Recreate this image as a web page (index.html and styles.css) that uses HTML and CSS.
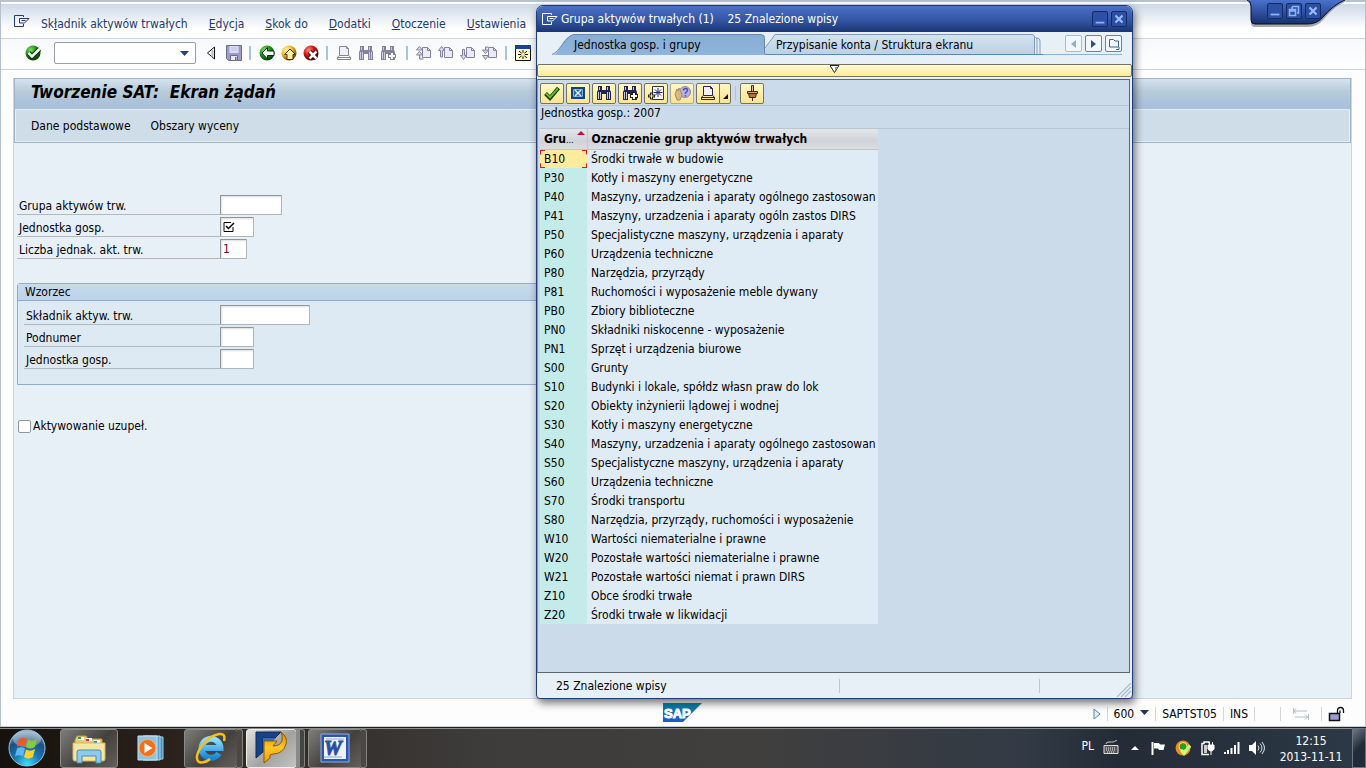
FILE: index.html
```html
<!DOCTYPE html>
<html lang="pl">
<head>
<meta charset="utf-8">
<title>Tworzenie SAT: Ekran żądań</title>
<link rel="stylesheet" href="styles.css">
</head>
<body>
<svg class="defs" aria-hidden="true">
  <defs>
    <radialGradient id="gGreen" cx=".35" cy=".3" r=".7"><stop offset="0" stop-color="#7be35a"/><stop offset=".5" stop-color="#1d9a16"/><stop offset="1" stop-color="#04400a"/></radialGradient>
    <radialGradient id="gYellow" cx=".35" cy=".3" r=".7"><stop offset="0" stop-color="#fff7a0"/><stop offset=".5" stop-color="#f5c21a"/><stop offset="1" stop-color="#7a4d00"/></radialGradient>
    <radialGradient id="gRed" cx=".35" cy=".3" r=".7"><stop offset="0" stop-color="#ff8a7a"/><stop offset=".5" stop-color="#d81414"/><stop offset="1" stop-color="#5a0000"/></radialGradient>
    <linearGradient id="gTab1" x2="0" y2="1"><stop offset="0" stop-color="#86add5"/><stop offset="1" stop-color="#90b5dd"/></linearGradient>
    <linearGradient id="gTab2" x2="0" y2="1"><stop offset="0" stop-color="#d3e4f1"/><stop offset="1" stop-color="#b9d0e8"/></linearGradient>
    <linearGradient id="gSap" x2="0" y2="1"><stop offset="0" stop-color="#0787a3"/><stop offset="1" stop-color="#1a58d0"/></linearGradient>
    <linearGradient id="gBlue" x2="0" y2="1"><stop offset="0" stop-color="#4a72cd"/><stop offset="1" stop-color="#16306f"/></linearGradient>
    <radialGradient id="gOrb" cx=".5" cy=".95" r=".9"><stop offset="0" stop-color="#3fe0ff"/><stop offset=".4" stop-color="#1779b8"/><stop offset=".75" stop-color="#1d4f80"/><stop offset="1" stop-color="#7fa5bf"/></radialGradient>
    <linearGradient id="gIe" x2="0" y2="1"><stop offset="0" stop-color="#8fe0ff"/><stop offset="1" stop-color="#1488d8"/></linearGradient>
    <linearGradient id="gGold" x2="0" y2="1"><stop offset="0" stop-color="#c98a00"/><stop offset=".5" stop-color="#ffc62a"/><stop offset="1" stop-color="#f29a00"/></linearGradient>
    <symbol id="exit" viewBox="0 0 16 12"><path d="M9.500 9v2.500h-9v-11h9V2" fill="none" stroke="currentColor"/><path d="M5.500 3.500h9.500M15 3.500l-4.500 4.500h-5V3.500M7.500 5.500h4" fill="none" stroke="currentColor"/></symbol>
    <symbol id="binoc" viewBox="0 0 16 16"><path d="M2 1h4v4h4V1h4v4l1 2v8h-5v-6H6v6H1V7l1-2z" fill="currentColor"/><path d="M3.500 2v3M11.500 2v3M2.500 7v7M4.500 7v7M11.500 7v7M13.500 7v7" stroke="#c8c8e6"/></symbol>
    <symbol id="printer" viewBox="0 0 16 16"><path d="M3.500 10.500v-9h7l2 2v7zM10.500 1.500v2h2" fill="#f1f0fb" stroke="currentColor"/><path d="M3 10.500L1.500 12.500v2h13v-2L13 10.500M1.500 12.500h13" fill="none" stroke="currentColor"/></symbol>
    <symbol id="page" viewBox="0 0 16 16"><path d="M6.500 2.500h5l3 3v7h-8zM11.500 2.500v3h3" fill="#eceafa" stroke="#85829f"/></symbol>
    <symbol id="min" viewBox="0 0 16 16"><path d="M3 12h10" stroke="#8fb4ff" stroke-width="2"/></symbol>
    <symbol id="close" viewBox="0 0 16 16"><path d="M4 4l8 8M12 4l-8 8" stroke="#9dbcff" stroke-width="2.500"/></symbol>
  </defs>
</svg>

<div class="app">
  <header class="head">
    <nav class="menu" aria-label="Menu">
      <svg class="exit" width="16" height="12"><use href="#exit"/></svg>
      <button>Sk<u>ł</u>adnik aktywów trwałych</button>
      <button><u>E</u>dycja</button>
      <button><u>S</u>kok do</button>
      <button><u>D</u>odatki</button>
      <button><u>O</u>toczenie</button>
      <button><u>U</u>stawienia</button>
    </nav>
    <div class="sysbox">
      <svg class="sysshape" width="98" height="28" viewBox="0 0 98 28"><path d="M0 0h98C88 4 82 11 76 18q-6 7-15 7H8q-4 0-4-4V6Q4 1 0 0z" fill="#111" opacity=".35" transform="translate(0 2)"/><path d="M0 0h98C88 4 82 11 76 17q-6 7-15 7H8q-4 0-4-4V6Q4 1 0 0z" fill="url(#gBlue)"/><path d="M0 0Q4 1 4 6v14q0 4 4 4h53q9 0 15-7Q86 5 98 0" fill="none" stroke="#080d20"/></svg>
      <div class="sysbtns">
        <button class="wbtn" aria-label="Minimalizuj"><svg width="14" height="14"><use href="#min"/></svg></button>
        <button class="wbtn" aria-label="Przywróć"><svg width="14" height="14" viewBox="0 0 14 14"><path d="M2.500 5.500h6v6h-6zM2 7h7M5 2.500h6.500V9H10M5 3v2" fill="none" stroke="#8fb4ff" stroke-width="1.500"/></svg></button>
        <button class="wbtn" aria-label="Zamknij"><svg width="14" height="14"><use href="#close"/></svg></button>
      </div>
    </div>
  </header>

  <div class="tools">
    <button class="ic t-ok" aria-label="Enter"><svg width="16" height="16" viewBox="0 0 16 16"><circle cx="8" cy="8" r="7.500" fill="url(#gGreen)"/><path d="M3.500 8l3.500 3.500L14.500 4" fill="none" stroke="#0c3a08" stroke-width="5"/><path d="M3.500 8l3.500 3.500L14.500 4" fill="none" stroke="#fff" stroke-width="2.500"/></svg></button>
    <div class="combo"><input type="text" aria-label="Komenda"><svg width="9" height="5" viewBox="0 0 9 5"><path d="M0 0h9L4.500 5z" fill="#27427c"/></svg></div>
    <button class="ic narrow" aria-label="Zwiń"><svg width="10" height="14" viewBox="0 0 10 14"><path d="M8.500 1v12L1.500 7z" fill="#fff" stroke="#111"/><path d="M6.500 4v7" stroke="#bbb" stroke-width="2"/></svg></button>
    <button class="ic t-save" aria-label="Zapisz"><svg width="16" height="16" viewBox="0 0 16 16"><path d="M.5.500h15v15h-13l-2-2z" fill="#9e9bc8" stroke="#6c6a91"/><path d="M3.500 1h9v7h-9z" fill="#dcdcf6"/><path d="M5 3h6M5 5h6" stroke="#bdbde0"/><path d="M4.500 10.500h7v5h-7z" fill="#e8e8f4" stroke="#6c6a91"/><path d="M9 12h1.500v3H9z" fill="#6c6a91"/></svg></button>
    <span class="sep"></span>
    <button class="ic" aria-label="Wstecz"><svg width="16" height="16" viewBox="0 0 16 16"><circle cx="8" cy="8" r="7.500" fill="url(#gGreen)"/><path d="M3 8l5.500-5.500v3.500h6.500v4.500H8.500V14z" fill="#fff" stroke="#062f06"/></svg></button>
    <button class="ic" aria-label="Zakończ"><svg width="16" height="16" viewBox="0 0 16 16"><circle cx="8" cy="8" r="7.500" fill="url(#gYellow)"/><path d="M9 4l5.500 5.500h-2.500v5H6v-5H3.500z" fill="#fff2a8" stroke="#4a3000"/></svg></button>
    <button class="ic" aria-label="Anuluj"><svg width="16" height="16" viewBox="0 0 16 16"><circle cx="8" cy="8" r="7.500" fill="url(#gRed)"/><path d="M6.500 6.500l7 7M13.500 6.500l-7 7" stroke="#300" stroke-width="4.500"/><path d="M6.500 6.500l7 7M13.500 6.500l-7 7" stroke="#fff" stroke-width="2.500"/></svg></button>
    <span class="sep"></span>
    <button class="ic dim" aria-label="Drukuj"><svg width="16" height="16"><use href="#printer"/></svg></button>
    <button class="ic dim" aria-label="Szukaj"><svg width="16" height="16"><use href="#binoc"/></svg></button>
    <button class="ic dim t-next" aria-label="Szukaj dalej"><svg width="16" height="16"><use href="#binoc"/><path d="M8 11h8M12 7v8" stroke="#85829f" stroke-width="4"/><path d="M9 11h6M12 8v6" stroke="#fff" stroke-width="2"/></svg></button>
    <span class="sep"></span>
    <button class="ic" aria-label="Pierwsza strona"><svg width="16" height="16"><use href="#page"/><path d="M.5 5L3.500 1.500l3 3.500zM.5 10l3-3.500 3 3.500zM3.500 10v4h4" fill="#dcd9f2" stroke="#85829f"/></svg></button>
    <button class="ic" aria-label="Poprzednia strona"><svg width="16" height="16"><use href="#page"/><path d="M.5 5.500l3-4 3 4h-2V12h-2V5.500z" fill="#dcd9f2" stroke="#85829f"/></svg></button>
    <button class="ic" aria-label="Następna strona"><svg width="16" height="16"><use href="#page"/><path d="M.5 10.500h2v-6h2v6h2l-3 4z" fill="#dcd9f2" stroke="#85829f"/></svg></button>
    <button class="ic" aria-label="Ostatnia strona"><svg width="16" height="16"><use href="#page"/><path d="M.5 5h6L3.500 8.500zM.5 10.500h6l-3 4zM3.500 5V2h3" fill="#dcd9f2" stroke="#85829f"/></svg></button>
    <span class="sep"></span>
    <button class="ic" aria-label="Nowy modus"><svg width="16" height="16" viewBox="0 0 16 16"><path d="M.5.500h15v15H.5z" fill="#fffbd0" stroke="#111"/><path d="M0 0h16v4H0z" fill="#1c3f9c"/><path d="M8 5v9M3 9.500h10M4 6l8 7M12 6l-8 7" stroke="#111"/><circle cx="8" cy="9.500" r="2" fill="#ffe95a"/></svg></button>
  </div>

  <main class="work">
    <div class="titlebox">
      <h1>Tworzenie SAT:&nbsp; Ekran żądań</h1>
      <div class="appbar"><button>Dane podstawowe</button><button>Obszary wyceny</button></div>
    </div>
    <form class="form">
      <div class="row"><label for="g">Grupa aktywów trw.</label><input id="g" class="w62" type="text"></div>
      <div class="row"><label for="j">Jednostka gosp.</label><span class="req"><input id="j" class="w34" type="text"><svg width="12" height="12" viewBox="0 0 12 12"><path d="M8 1.500H1v9h9V6" fill="none" stroke="#000"/><path d="M3 5l2.500 2.500L11 2" fill="none" stroke="#000" stroke-width="1.500"/></svg></span></div>
      <div class="row"><label for="l">Liczba jednak. akt. trw.</label><input id="l" class="w27 num" type="text" value="1"></div>
      <section class="group">
        <h2>Wzorzec</h2>
        <div class="groupbody">
          <div class="row"><label for="s">Składnik aktyw. trw.</label><input id="s" class="w90" type="text"></div>
          <div class="row"><label for="p">Podnumer</label><input id="p" class="w34" type="text"></div>
          <div class="row"><label for="k">Jednostka gosp.</label><input id="k" class="w34" type="text"></div>
        </div>
      </section>
      <label class="check"><input type="checkbox">Aktywowanie uzupeł.</label>
    </form>
  </main>

  <footer class="status">
    <svg class="sap" width="40" height="19" viewBox="0 0 40 19"><path d="M0 0h39L20 19H0z" fill="url(#gSap)"/><text x="1" y="15">SAP</text></svg>
    <div class="stat">
      <svg width="8" height="12" viewBox="0 0 8 12"><path d="M1 1v10l6-5z" fill="#e3f2fb" stroke="#5b82b0"/></svg>
      <i></i><span>600</span><svg class="dd" width="9" height="5" viewBox="0 0 9 5"><path d="M0 0h9L4.500 5z" fill="#1d2f63"/></svg>
      <i></i><span>SAPTST05</span><i></i><span>INS</span><i></i><b></b><i></i>
      <svg class="swap" width="18" height="14" viewBox="0 0 18 14"><path d="M1.500 1v6M1 4h14M4 1.500L2 4l2 2.500M16.500 7v6M3 10h13M13 7.500l2.500 2.500-2.500 2.500" fill="none" stroke="#b9bcc2"/></svg>
      <i></i>
      <svg width="17" height="16" viewBox="0 0 17 16"><path d="M1.500 7.500h10v7h-10z" fill="#9a9ad0" stroke="#111" stroke-width="1.500"/><path d="M9.500 7V4q0-2.500 3-2.500t3 3V7M12 7V4.500" fill="none" stroke="#111" stroke-width="1.300"/></svg>
    </div>
  </footer>
</div>

<section class="dialog" role="dialog" aria-labelledby="dt">
  <div class="dtitle">
    <svg width="16" height="12"><use href="#exit"/></svg>
    <h2 id="dt">Grupa aktywów trwałych (1)&nbsp;&nbsp;&nbsp; 25 Znalezione wpisy</h2>
    <button class="wbtn" aria-label="Minimalizuj"><svg width="14" height="14"><use href="#min"/></svg></button>
    <button class="wbtn" aria-label="Zamknij"><svg width="14" height="14"><use href="#close"/></svg></button>
  </div>
  <div class="tabs">
    <button class="tab tab1"><svg width="213" height="21" viewBox="0 0 213 21"><path d="M0 21C8 21 9 3 22 .500H209q4 0 4 4V21z" fill="url(#gTab1)"/><path d="M0 20.500C8 18 14 1 22 .500H209q3.500 0 3.500 4V20" fill="none" stroke="#6389b4"/></svg><span>Jednostka gosp. i grupy</span></button>
    <button class="tab tab2"><svg width="278" height="21" viewBox="0 0 278 21"><path d="M0 21V15L10 .500H267q2 0 2 3V21z" fill="url(#gTab2)"/><path d="M0 14L10 .500H267q2.500 0 2.500 3V20M269 3q3 0 3 3V20M272 4q3 0 3 3V20" fill="none" stroke="#7c9dbd"/><path d="M0 20.500h278" stroke="#5f88b5"/></svg><span>Przypisanie konta / Struktura ekranu</span></button>
    <div class="tabnav">
      <button class="off" aria-label="Poprzednia karta"><svg width="5" height="8" viewBox="0 0 5 8"><path d="M5 0v8L0 4z" fill="#93afc9"/></svg></button>
      <button aria-label="Następna karta"><svg width="5" height="8" viewBox="0 0 5 8"><path d="M0 0v8l5-4z" fill="#2f5377"/></svg></button>
      <button aria-label="Lista kart"><svg width="12" height="12" viewBox="0 0 12 12"><path d="M1.500 9V1.500h4L7 3h3.500v6zM8 11.500h3V9" fill="none" stroke="#3d678e"/></svg></button>
    </div>
  </div>
  <button class="fold" aria-label="Ograniczenia"><svg width="10" height="8" viewBox="0 0 10 8"><path d="M0 .500h9L4.500 7.500z" fill="#fff" stroke="#222"/><path d="M5 2h2.500L5 6z" fill="#999"/></svg></button>
  <div class="frame">
    <div class="ybar">
      <button class="yb" aria-label="Kopiuj"><svg width="16" height="16" viewBox="0 0 16 16"><path d="M1.500 8.500L6 13 14.500 3" fill="none" stroke="#143a08" stroke-width="4"/><path d="M2 8.500L6 12.300 14 3.300" fill="none" stroke="#5fc02a" stroke-width="2"/></svg></button>
      <button class="yb" aria-label="Zamknij"><svg width="16" height="16" viewBox="0 0 16 16"><path d="M1 2h14v12H1z" fill="#16407f"/><path d="M3.500 4.500h9v7h-9z" fill="#2b62a8" stroke="#7eaedc"/><path d="M5 5l6 6M11 5l-6 6" stroke="#d6ecff" stroke-width="1.500"/></svg></button>
      <button class="yb navy" aria-label="Szukaj"><svg width="16" height="16"><use href="#binoc"/></svg></button>
      <button class="yb navy" aria-label="Szukaj dalej"><svg width="16" height="16"><use href="#binoc"/><path d="M8 11h8M12 7v8" stroke="#222" stroke-width="4"/><path d="M9 11h6M12 8v6" stroke="#fff" stroke-width="2"/></svg></button>
      <button class="yb" aria-label="Nowy wybór"><svg width="16" height="16" viewBox="0 0 16 16"><path d="M4.500 1.500h11v13H4.500z" fill="#f5f3ff" stroke="#333"/><path d="M10 3v9M5.500 7.500h9M7 4.500l6 6M13 4.500l-6 6" stroke="#26306c"/><path d="M0 11h7M3.500 7.500v7" stroke="#222" stroke-width="3"/><path d="M1 11h5M3.500 8.500v5" stroke="#ffe75a"/></svg></button>
      <button class="yb yoff" aria-label="Wybór osobisty"><svg width="17" height="16" viewBox="0 0 17 16"><circle cx="11" cy="7" r="5.500" fill="#b5b3e2" stroke="#8583b4"/><path d="M9.500 5.500q0-2 2-2t2 1.500-2 3v1M11.500 10v1.500" fill="none" stroke="#5551a4" stroke-width="1.500"/><path d="M1 9l2-5 1 2 1-3 2 4 1 3-2 5H3z" fill="#d8b780" stroke="#a98d62"/></svg></button>
      <button class="yb navy ypr" aria-label="Drukuj"><svg width="16" height="16"><use href="#printer"/></svg></button><button class="yb ydd" aria-label="Opcje drukowania"><svg width="5" height="5" viewBox="0 0 5 5"><path d="M5 0v5H0z" fill="#111"/></svg></button>
      <span class="sep"></span>
      <button class="yb" aria-label="Przypnij"><svg width="16" height="16" viewBox="0 0 16 16"><path d="M7.500 .500h2v6h-2z" fill="#e8b890" stroke="#4a2615"/><path d="M3.500 6.500h10v2h-10z" fill="#e0a070" stroke="#4a2615"/><path d="M4.500 8.500h8l-1 4h-6z" fill="#b9703f" stroke="#4a2615"/><path d="M8.500 13v3" stroke="#4a2615"/></svg></button>
    </div>
    <p class="crit">Jednostka gosp.: 2007</p>
    <table>
      <thead><tr><th scope="col" class="c1">Gru<small>...</small><svg width="8" height="4" viewBox="0 0 8 4"><path d="M4 0l4 4H0z" fill="#c8102e"/></svg></th><th scope="col">Oznaczenie grup aktywów trwałych</th></tr></thead>
      <tbody>
        <tr class="sel"><td>B10<span class="cur"></span></td><td>Środki trwałe w budowie</td></tr>
        <tr><td>P30</td><td>Kotły i maszyny energetyczne</td></tr>
        <tr><td>P40</td><td>Maszyny, urzadzenia i aparaty ogólnego zastosowan</td></tr>
        <tr><td>P41</td><td>Maszyny, urzadzenia i aparaty ogóln zastos DIRS</td></tr>
        <tr><td>P50</td><td>Specjalistyczne maszyny, urządzenia i aparaty</td></tr>
        <tr><td>P60</td><td>Urządzenia techniczne</td></tr>
        <tr><td>P80</td><td>Narzędzia, przyrządy</td></tr>
        <tr><td>P81</td><td>Ruchomości i wyposażenie meble dywany</td></tr>
        <tr><td>PB0</td><td>Zbiory biblioteczne</td></tr>
        <tr><td>PN0</td><td>Składniki niskocenne - wyposażenie</td></tr>
        <tr><td>PN1</td><td>Sprzęt i urządzenia biurowe</td></tr>
        <tr><td>S00</td><td>Grunty</td></tr>
        <tr><td>S10</td><td>Budynki i lokale, spółdz własn praw do lok</td></tr>
        <tr><td>S20</td><td>Obiekty inżynierii lądowej i wodnej</td></tr>
        <tr><td>S30</td><td>Kotły i maszyny energetyczne</td></tr>
        <tr><td>S40</td><td>Maszyny, urzadzenia i aparaty ogólnego zastosowan</td></tr>
        <tr><td>S50</td><td>Specjalistyczne maszyny, urządzenia i aparaty</td></tr>
        <tr><td>S60</td><td>Urządzenia techniczne</td></tr>
        <tr><td>S70</td><td>Środki transportu</td></tr>
        <tr><td>S80</td><td>Narzędzia, przyrządy, ruchomości i wyposażenie</td></tr>
        <tr><td>W10</td><td>Wartości niematerialne i prawne</td></tr>
        <tr><td>W20</td><td>Pozostałe wartości niematerialne i prawne</td></tr>
        <tr><td>W21</td><td>Pozostałe wartości niemat i prawn DIRS</td></tr>
        <tr><td>Z10</td><td>Obce środki trwałe</td></tr>
        <tr><td>Z20</td><td>Środki trwałe w likwidacji</td></tr>
      </tbody>
    </table>
  </div>
  <div class="dstatus">
    <span>25 Znalezione wpisy</span><i></i><i class="far"></i>
    <svg width="14" height="14" viewBox="0 0 14 14"><path d="M0 14L14 0M4 14L14 4M8 14l6-6" stroke="#a9b6c4" stroke-width="1.200"/></svg>
  </div>
</section>

<div class="taskbar">
  <button class="orb" aria-label="Start"><svg width="38" height="38" viewBox="0 0 38 38"><circle cx="19" cy="19" r="18" fill="url(#gOrb)" stroke="#9cc3da"/><ellipse cx="19" cy="10" rx="14" ry="8" fill="#dceaf3" opacity=".4"/><path d="M11 10q4-2.500 8 0l-2 8q-4-2.500-8 0z" fill="#ee5a24"/><path d="M20 10.500q4 2.500 9-.5l-2 8q-5 3-9 0z" fill="#8cc63e"/><path d="M9 19.500q4-2.500 8 0l-2 8q-4-2.500-8 0z" fill="#5cb8f0"/><path d="M18 20.500q4 2.500 9-.5l-2 8q-5 3-9 0z" fill="#ffd02e"/></svg></button>
  <button class="task t-exp" aria-label="Eksplorator"><svg width="34" height="32" viewBox="0 0 34 32"><path d="M3 8l2-4h9l2 3h14v21H3z" fill="#e6cd7a" stroke="#b99b45"/><path d="M6 5h6v3H6zM14 6h6v3h-6zM22 8h6v3h-6z" fill="#fff"/><path d="M6 5h3v2H6z" fill="#26a44a"/><path d="M14 7h3v2h-3z" fill="#d33"/><path d="M22 9h3v2h-3z" fill="#28c"/><path d="M1 11h32v16q0 2-2 2H3q-2 0-2-2z" fill="#f6e6a2" stroke="#d0b562"/><path d="M5 31V20q0-2 2-2h20q2 0 2 2v11h-5v-7H10v7z" fill="#8fcbe8" stroke="#3e8fb8"/></svg></button>
  <button class="task t-wmp" aria-label="Media Player"><svg width="28" height="26" viewBox="0 0 28 26"><path d="M8 1l18 1v22l-18 1z" fill="#4a8fb8" stroke="#9dd0e8"/><path d="M6 1l17 0v24H6z" fill="#5ba3cc" stroke="#a9d8ee"/><path d="M1 1h19v24H1z" fill="#8cc4e2" stroke="#c4e6f6"/><circle cx="10.500" cy="13" r="8.500" fill="#f0701c" stroke="#ffb070"/><path d="M7.500 8v10l8-5z" fill="#fff"/></svg></button>
  <button class="task t-ie stack" aria-label="Internet Explorer"><svg width="34" height="34" viewBox="0 0 34 34"><path d="M25 22.500A9.500 9.500 0 1 1 26.500 17H9" fill="none" stroke="url(#gIe)" stroke-width="6"/><path d="M30 10q2-8-5-7Q14 5 7 16T5 31q5 2 11-3" fill="none" stroke="#f4bf1f" stroke-width="2.500"/></svg></button>
  <button class="task t-sap stack2" aria-label="SAP Logon"><svg width="34" height="34" viewBox="0 0 34 34"><path d="M1 1h25l-6 6H8v14l-7 6z" fill="#174486" stroke="#0c2a5c"/><path d="M8 7h13L9 19z" fill="#3b6db4"/><path d="M9 10h13l-4 5q7 0 9-5 1-5-1-9 7 5 5 12-3 10-13 10l-3 1v3l-6 5z" fill="url(#gGold)" stroke="#8a5a00"/></svg></button>
  <button class="task t-word stack" aria-label="Word"><svg width="30" height="30" viewBox="0 0 30 30"><path d="M1 1h28v28H1z" fill="#2b56b0" stroke="#8fb0e8"/><path d="M4 4h22v22H4z" fill="#eef3fc"/><text x="4" y="22">W</text><path d="M4 24h18M6 6h18" stroke="#8aa5d8"/></svg></button>
  <div class="tray">
    <span class="lang">PL</span>
    <svg width="16" height="16" viewBox="0 0 16 16"><path d="M1 5.500h14v8H1z" fill="#555" stroke="#ddd"/><path d="M3 8h10M3 10h10M4 12h8" stroke="#eee" stroke-dasharray="1 1"/><path d="M3 4q0-2 3-2t4 0 4-2" fill="none" stroke="#ccc"/></svg>
    <svg class="up" width="8" height="4" viewBox="0 0 8 4"><path d="M4 0l4 4H0z" fill="#fff"/></svg>
    <svg width="15" height="15" viewBox="0 0 15 15"><path d="M1.500 1v13" stroke="#fff" stroke-width="2"/><path d="M3 2h5l1 1.500h5L12.500 9H8L7 7.500H3z" fill="#fff"/></svg>
    <svg width="17" height="16" viewBox="0 0 17 16"><circle cx="8" cy="8" r="7.500" fill="#ee8a1c"/><circle cx="8" cy="6.500" r="4" fill="#2c9d1c" stroke="#ffe3a0"/><path d="M6 10l3 3.500 6-8" fill="none" stroke="#c4ff76" stroke-width="3"/></svg>
    <svg width="14" height="16" viewBox="0 0 14 16"><path d="M8 3.500V2H3v1.500H1v11h7" fill="none" stroke="#fff" stroke-width="1.500"/><path d="M3 5h3v8H3z" fill="#ccc"/><path d="M7 5h6v4q-1 2-3 2t-3-2zM8.500 2v3M11.500 2v3M10 11v4" fill="#fff" stroke="#fff"/></svg>
    <svg width="16" height="12" viewBox="0 0 16 12"><path d="M1 12v-2M4 12V8M7.500 12V6M11 12V3M14.500 12V0" stroke="#fff" stroke-width="2"/></svg>
    <svg width="16" height="14" viewBox="0 0 16 14"><path d="M0 4h3l4-4v14l-4-4H0z" fill="#fff"/><path d="M9 4.500q2 2.500 0 5M11 2.500q4 4.500 0 9M13 1q5 6 0 12" fill="none" stroke="#dfe5ea"/></svg>
    <div class="clock"><span>12:15</span><span>2013-11-11</span></div>
    <button class="desk" aria-label="Pokaż pulpit"></button>
  </div>
</div>
</body>
</html>
```

FILE: styles.css
```css
* { box-sizing: border-box; }
body {
  margin: 0;
  min-height: 100vh;
  display: flex;
  flex-direction: column;
  position: relative;
  overflow: hidden;
  font: 12px/16px "DejaVu Sans Condensed", "DejaVu Sans", sans-serif;
  font-stretch: condensed;
  color: #000;
}
button, input { font: inherit; color: inherit; margin: 0; padding: 0; }
button { background: none; border: 0; display: inline-flex; align-items: center; justify-content: center; white-space: nowrap; }
input { display: block; }
svg { display: block; flex: none; }
h1, h2, p { margin: 0; }
.defs { position: absolute; width: 0; height: 0; }

/* main window */
.app { flex: 1; display: flex; flex-direction: column; border: 1px solid #b4c0ce; border-bottom-color: #c9cdd4; background: #fdfdfe; }
.head { height: 38px; display: flex; border-bottom: 1px solid #cdd3dc; background: linear-gradient(#b7c3d6 0 1px, #fff 1px 3px, #cdd9e8 3px, #fff 28px); }
.menu { flex: 1; display: flex; align-items: center; gap: 21px; padding: 9px 0 0 13px; color: #24396f; }
.menu .exit { margin: 0 -10px 6px 0; color: #24396f; }
.sysbox { position: relative; width: 118px; }
.sysshape { position: absolute; top: -1px; left: 0; }
.sysbtns { position: relative; display: flex; gap: 3px; padding: 2px 0 0 20px; }
.wbtn { width: 16px; height: 16px; border: 1px solid #142a63; border-radius: 2px; background: #2d50a4; }
.tools { height: 31px; display: flex; align-items: center; padding: 0 0 3px 24px; border-bottom: 1px solid #cdd3dc; background: linear-gradient(#f6f8fb, #fff); }
.ic { width: 16px; height: 16px; margin-right: 6px; }
.t-ok { margin-right: 13px; }
.t-save { margin-left: 4px; }
.t-next { margin-right: 9px; }
.narrow { width: 10px; }
.dim { color: #85829f; }
.combo { position: relative; margin-right: 10px; }
.combo input { width: 142px; height: 22px; border: 1px solid #9a9ea5; border-radius: 2px; background: #fff; }
.combo svg { position: absolute; right: 7px; top: 9px; }
.sep { width: 2px; height: 14px; margin: 0 8px 0 1px; background: #a9c3dc; }

.work { flex: 1; margin: 8px 13px 0 12px; border: 1px solid #cbd5e1; border-top: 0; background: #e8f0f7; }
.titlebox { border: 1px solid #9fb3c9; box-shadow: inset 0 0 0 1px #e4eef6; background: #cfdde8; }
h1 { height: 31px; padding: 0 16px; font: italic bold 17px/27px "DejaVu Sans Condensed", "DejaVu Sans", sans-serif; font-stretch: condensed; border-bottom: 1px solid #e1ebf3; background: linear-gradient(#d4e3ee, #b9ccd9 40%, #aec4dc 70%, #a9c0da); }
.appbar { height: 32px; display: flex; align-items: center; gap: 20px; padding: 0 16px; }
.form { padding: 52px 0 0 3px; }
.row { display: flex; margin-bottom: 2px; }
.row label { width: 203px; height: 20px; padding: 3px 0 0 2px; line-height: 16px; border-bottom: 1px solid #b3b8bd; }
.row input { height: 20px; padding: 0 3px; border: 1px solid #8f969d; border-right-color: #b0b5ba; border-bottom-color: #b0b5ba; border-radius: 1px; background: #fff; box-shadow: inset 1px 1px 2px #ddd; }
.w62 { width: 62px; } .w34 { width: 34px; } .w27 { width: 27px; } .w90 { width: 90px; }
.row .num { padding: 0 2px; color: #6b0e23; }
.req { position: relative; }
.req svg { position: absolute; left: 3px; top: 4px; }
.group { width: 68%; margin: 24px 0 33px; border: 1px solid #8fabcd; border-radius: 3px 3px 0 0; background: #deeaf3; }
.group h2 { height: 17px; padding: 0 7px; font-size: 12px; font-weight: normal; line-height: 16px; border-bottom: 1px solid #8fabcd; background: linear-gradient(#c9dbec, #bcd3ea); }
.groupbody { padding: 4px 0 13px 6px; }
.groupbody .row label { width: 196px; }
.check { display: flex; align-items: center; gap: 2px; height: 16px; padding-left: 1px; }
.check input { appearance: none; width: 13px; height: 13px; border: 1px solid #8f969d; border-radius: 2px; background: #fff; }

.status { height: 27px; display: flex; align-items: center; padding: 0 20px 0 662px; }
.sap text { font: bold 13px "Liberation Sans", sans-serif; fill: #fff; stroke: #fff; }
.stat { margin-left: auto; display: flex; align-items: center; gap: 6px; padding-top: 2px; }
.stat i { width: 1px; height: 14px; background: #d2d6db; }
.stat b { width: 13px; }
.swap { margin: 0 5px; }
.dd { margin-bottom: 3px; }

/* search help window */
.dialog { position: absolute; left: 536px; top: 5px; width: 597px; border: 1px solid #1e3c7c; border-radius: 7px 7px 4px 4px; background: #e8f0f7; box-shadow: 2px 4px 9px rgba(0,0,0,.55); overflow: hidden; }
.dtitle { height: 26px; display: flex; align-items: center; gap: 3px; padding: 0 5px; color: #fff; background: linear-gradient(#4a70c6, #3558a8 50%, #1a3573); }
.dtitle h2 { flex: 1; font-size: 12px; font-weight: normal; }
.tabs { height: 32px; display: flex; align-items: flex-start; padding: 2px 10px 0 15px; }
.tab { position: relative; height: 21px; }
.tab svg { position: absolute; left: 0; top: 0; }
.tab span { position: relative; }
.tab1 { width: 213px; justify-content: flex-start; padding-left: 22px; }
.tab2 { width: 278px; justify-content: flex-start; padding-left: 11px; }
.tabnav { flex: 1; display: flex; justify-content: flex-end; gap: 3px; height: 21px; padding-top: 1px; border-bottom: 1px solid #8fb2d6; }
.tabnav button { width: 17px; height: 17px; border: 1px solid #5f87ae; border-radius: 2px; background: #f2f7fb; }
.tabnav .off { border-color: #a3bdd6; }
.fold { display: flex; width: 100%; height: 13px; border: 1px solid #77735e; border-radius: 2px; background: linear-gradient(#fffbd8, #feea94); align-items: flex-start; }
.frame { margin: 2px 2px 0 0; padding: 1px 0 48px 2px; border: 1px solid #5f6670; border-left-color: #8d97a3; background: #cbdbe9; }
.ybar { display: flex; align-items: center; gap: 2px; height: 25px; border-bottom: 1px solid #b9c6d2; }
.ybar .sep { margin: 0 2px; width: 1px; }
.yb { width: 24px; height: 21px; border: 1px solid #77725c; border-radius: 2px; background: linear-gradient(#fff7c6, #fbe492); }
.yoff { border-color: #aba892; }
.navy { color: #20264f; }
.ypr { border-radius: 2px 0 0 2px; }
.ydd { width: 12px; margin-left: -3px; border-radius: 0 2px 2px 0; align-items: flex-end; padding-bottom: 4px; }
.crit { height: 23px; padding-left: 1px; line-height: 15px; border-bottom: 1px solid #b9c6d2; }
table { border-collapse: collapse; table-layout: fixed; width: 338px; background: #dfebf5; }
th, td { height: 19px; padding: 0 0 0 4px; line-height: 18px; text-align: left; white-space: nowrap; }
th { height: 20px; position: relative; background: linear-gradient(#e3e6ea, #cfd3d9 60%, #dadde1); border-bottom: 1px solid #bcc6d0; }
th + th { border-left: 1px solid #c2c8ce; }
.c1 { width: 47px; }
th small { font-size: 9px; line-height: 12px; font-weight: normal; }
th svg { position: absolute; right: 2px; top: 2px; }
td:first-child { position: relative; background: #c3ebea; }
.sel td:first-child { background: #feec9c; }
.cur { position: absolute; inset: 0; border: 1px solid #d81e1e; clip-path: polygon(0 0, 5px 0, 5px 5px, calc(100% - 5px) 5px, calc(100% - 5px) 0, 100% 0, 100% 5px, 0 5px, 0 14px, 100% 14px, 100% 100%, calc(100% - 5px) 100%, calc(100% - 5px) 14px, 5px 14px, 5px 100%, 0 100%); }
.dstatus { height: 25px; display: flex; align-items: center; padding-left: 19px; }
.dstatus span { width: 283px; }
.dstatus i { width: 1px; height: 14px; background: #bec6ce; }
.dstatus .far { margin-left: 199px; }
.dstatus svg { margin: 8px 1px 0 auto; }

/* taskbar */
.taskbar { height: 41px; display: flex; align-items: center; border-top: 1px solid #222; box-shadow: inset 0 1px #8c8c88; padding-left: 8px; background: linear-gradient(90deg, #15110c, #2b211c 12%, #3d3c3a 35%, #403f3e 55%, #323a45 75%, #232b36 82%, #2c3947); color: #fff; }
.orb { margin-right: 14px; }
.task { position: relative; height: 39px; border: 1px solid #8a8a86; border-radius: 3px; background: linear-gradient(135deg, #7d7d7b, #43403d 55%, #63605c); }
.t-exp { width: 58px; }
.t-wmp { width: 50px; margin: 0 8px; border-color: transparent; background: none; }
.t-ie { width: 54px; margin-right: 8px; }
.t-sap { width: 51px; margin-right: 11px; background: linear-gradient(135deg, #e2e2e0, #a2a2a0 55%, #c4c4c0); border-color: #eee; }
.t-word { width: 54px; }
.t-word text { font: italic bold 20px "Liberation Serif", serif; fill: #2b4fa0; stroke: #2b4fa0; }
.stack::after, .stack2::after { content: ""; position: absolute; top: -1px; bottom: -1px; left: 100%; width: 5px; border: 1px solid #85857f; border-left: 0; border-radius: 0 3px 3px 0; background: #4a4744; }
.stack2::after { width: 8px; background: linear-gradient(90deg, #8a8a86 4px, #444 4px); }
.tray { margin-left: auto; align-self: stretch; display: flex; align-items: center; gap: 9px; }
.lang { margin-bottom: 4px; }
.up { margin: 0 3px; }
.clock { width: 74px; display: flex; flex-direction: column; align-items: center; margin: 0 -5px 0 0; padding-top: 2px; }
.desk { width: 14px; align-self: stretch; border: 1px solid #697683; background: linear-gradient(135deg, #6f7985, #222c38 50%); }
```
